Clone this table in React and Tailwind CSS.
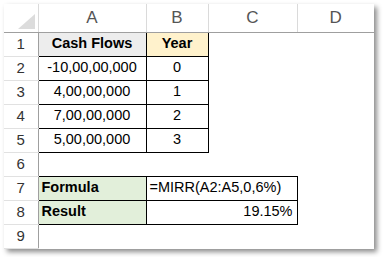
const rows = [
  ['-10,00,00,000', '0'],
  ['4,00,00,000', '1'],
  ['7,00,00,000', '2'],
  ['5,00,00,000', '3'],
];

function RowNum({ n }) {
  return (
    <td className="h-[24px] p-0 text-center text-[15px] text-[#333] border-b border-b-[#e1e1e1] border-r border-r-[#9f9f9f]">
      {n}
    </td>
  );
}

export default function App() {
  return (
    <div className="w-[383px] h-[257px] bg-white pt-[4px] pl-[4px] font-['Liberation_Sans',Arial,sans-serif]">
      <div className="w-[370px] h-[245px] bg-white shadow-[3px_3px_5px_rgba(0,0,0,0.45)] overflow-hidden">
        <table className="table-fixed border-collapse w-[370px]">
          <colgroup>
            <col className="w-[34px]" />
            <col className="w-[108px]" />
            <col className="w-[62px]" />
            <col className="w-[89px]" />
            <col className="w-[77px]" />
          </colgroup>
          <thead>
            <tr className="h-[28px] text-[17px] text-[#555] font-normal">
              <th className="p-0 border-b border-b-[#9f9f9f] border-r border-r-[#dadada] relative">
                <div className="absolute right-[3px] bottom-[3px] w-0 h-0 border-l-[17px] border-l-transparent border-b-[15px] border-b-[#dcdcdc]" />
              </th>
              <th className="p-0 font-normal border-b border-b-[#9f9f9f] border-r border-r-[#dadada]">A</th>
              <th className="p-0 font-normal border-b border-b-[#9f9f9f] border-r border-r-[#dadada]">B</th>
              <th className="p-0 font-normal border-b border-b-[#9f9f9f] border-r border-r-[#dadada]">C</th>
              <th className="p-0 font-normal border-b border-b-[#9f9f9f]">D</th>
            </tr>
          </thead>
          <tbody className="text-[14.5px] text-black">
            <tr>
              <RowNum n={1} />
              <td className="p-0 text-center font-bold bg-[#ededed] border border-black">Cash Flows</td>
              <td className="p-0 text-center font-bold bg-[#fff2cc] border border-black">Year</td>
              <td />
              <td />
            </tr>
            {rows.map(([a, b], i) => (
              <tr key={i}>
                <RowNum n={i + 2} />
                <td className="p-0 text-center border border-black">{a}</td>
                <td className="p-0 text-center border border-black">{b}</td>
                <td />
                <td />
              </tr>
            ))}
            <tr>
              <RowNum n={6} />
              <td />
              <td />
              <td />
              <td />
            </tr>
            <tr>
              <RowNum n={7} />
              <td className="p-0 pl-[3px] font-bold bg-[#e2efda] border border-black">Formula</td>
              <td colSpan={2} className="p-0 pl-[3px] border border-black whitespace-nowrap">=MIRR(A2:A5,0,6%)</td>
              <td />
            </tr>
            <tr>
              <RowNum n={8} />
              <td className="p-0 pl-[3px] font-bold bg-[#e2efda] border border-black">Result</td>
              <td colSpan={2} className="p-0 pr-[4px] text-right border border-black">19.15%</td>
              <td />
            </tr>
            <tr>
              <RowNum n={9} />
              <td />
              <td />
              <td />
              <td />
            </tr>
          </tbody>
        </table>
      </div>
    </div>
  );
}
